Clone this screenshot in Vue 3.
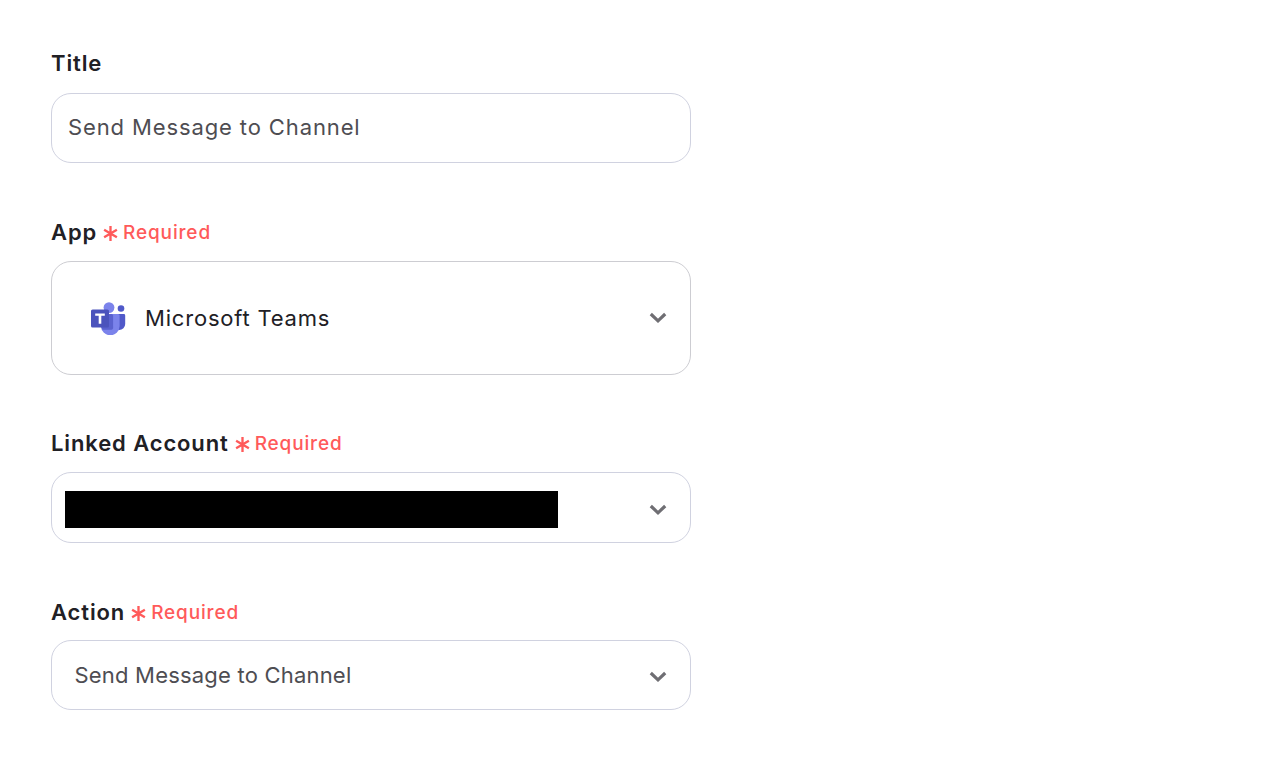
<script setup>
const chevron = 'M1.8 2 L9 8.8 L16.2 2'
</script>

<template>
  <div class="page">
    <section class="field first">
      <div class="label-row"><span class="label">Title</span></div>
      <div class="box title-box"><span class="value title-value">Send Message to Channel</span></div>
    </section>

    <section class="field app-field">
      <div class="label-row">
        <span class="label">App</span>
        <span class="req"><svg class="star" viewBox="0 0 16 16"><path d="M8 1V15M2 4.5L14 11.5M14 4.5L2 11.5" /></svg>Required</span>
      </div>
      <div class="box app-box">
        <svg class="teams" viewBox="0 0 35 33">
          <circle cx="30" cy="6.5" r="3.3" fill="#5059c9" />
          <path d="M23 12h9.8a1.4 1.4 0 0 1 1.4 1.4v8.6a6 6 0 0 1-6 6h-1a6 6 0 0 1-4.2-3z" fill="#5059c9" />
          <circle cx="18" cy="5.6" r="5.4" fill="#7b83eb" />
          <path d="M10 12h17a1.6 1.6 0 0 1 1.6 1.6v10.4a9 9 0 0 1-18.6 0z" fill="#7b83eb" />
          <path d="M10 12h10.5a1.6 1.6 0 0 1 1.6 1.6v12.5a1.6 1.6 0 0 1-1.6 1.6h-9a9 9 0 0 1-1.5-3.7z" fill="#5a62cf" />
          <rect x="0" y="7.5" width="18" height="18" rx="1.6" fill="#4b53bc" />
          <path d="M4.2 11.6h9.6v2.1h-3.5v8H7.7v-8H4.2z" fill="#fff" />
        </svg>
        <span class="app-name">Microsoft Teams</span>
        <svg class="chev" viewBox="0 0 18 11"><path :d="chevron" /></svg>
      </div>
    </section>

    <section class="field linked-field">
      <div class="label-row">
        <span class="label">Linked Account</span>
        <span class="req"><svg class="star" viewBox="0 0 16 16"><path d="M8 1V15M2 4.5L14 11.5M14 4.5L2 11.5" /></svg>Required</span>
      </div>
      <div class="box linked-box">
        <div class="redacted"></div>
        <svg class="chev" viewBox="0 0 18 11"><path :d="chevron" /></svg>
      </div>
    </section>

    <section class="field action-field">
      <div class="label-row">
        <span class="label">Action</span>
        <span class="req"><svg class="star" viewBox="0 0 16 16"><path d="M8 1V15M2 4.5L14 11.5M14 4.5L2 11.5" /></svg>Required</span>
      </div>
      <div class="box action-box">
        <span class="value action-value">Send Message to Channel</span>
        <svg class="chev" viewBox="0 0 18 11"><path :d="chevron" /></svg>
      </div>
    </section>
  </div>
</template>

<style>
html, body { margin: 0; background: #fff; }
</style>

<style scoped>
.page {
  padding: 48px 0 0 51px;
  width: 640px;
  font-family: Inter, "Liberation Sans", sans-serif;
}
.field { margin-top: 54px; }
.field.first { margin-top: 0; }
.linked-field { margin-top: 53px; }
.label-row {
  display: flex;
  align-items: center;
  height: 30px;
  margin-bottom: 14px;
}
.first .label-row { margin-bottom: 15px; }
.action-field .label-row { margin-bottom: 13px; }
.label {
  font-size: 22px;
  font-weight: 600;
  letter-spacing: 0.88px;
  color: #212025;
}
.req {
  display: flex;
  align-items: center;
  margin-left: 5px;
  font-size: 19px;
  font-weight: 500;
  letter-spacing: 0.85px;
  color: #ff5a5a;
}
.star {
  width: 17px;
  height: 17px;
  margin: 3px 4px 0 0;
  fill: none;
  stroke: #ff5a5a;
  stroke-width: 2.2;
}
.box {
  box-sizing: border-box;
  display: flex;
  align-items: center;
  width: 640px;
  border: 1px solid #d0d2e0;
  border-radius: 20px;
  background: #fff;
}
.title-box { height: 70px; padding-left: 16px; }
.app-box { height: 114px; padding-left: 39px; border-color: #cdcdd2; }
.linked-box { height: 71px; padding: 4px 0 0 13px; }
.action-box { height: 70px; padding-left: 23px; }
.value {
  font-size: 22px;
  letter-spacing: 0.88px;
  color: #4e4d52;
}
.title-value { margin-top: -2px; }
.action-value { letter-spacing: 0.2px; margin-left: -0.5px; }
.teams { width: 35px; height: 33px; flex: none; margin-right: 19px; }
.app-name {
  font-size: 22px;
  letter-spacing: 0.8px;
  color: #212025;
}
.redacted { width: 493px; height: 37px; background: #000; }
.chev {
  width: 18px;
  height: 11px;
  margin-left: auto;
  margin-right: 23px;
  margin-top: -1px;
  fill: none;
  stroke: #6f6e73;
  stroke-width: 3.2;
}
.linked-box .chev { margin-top: -1px; }
.action-box .chev { margin-top: 3px; }
</style>
